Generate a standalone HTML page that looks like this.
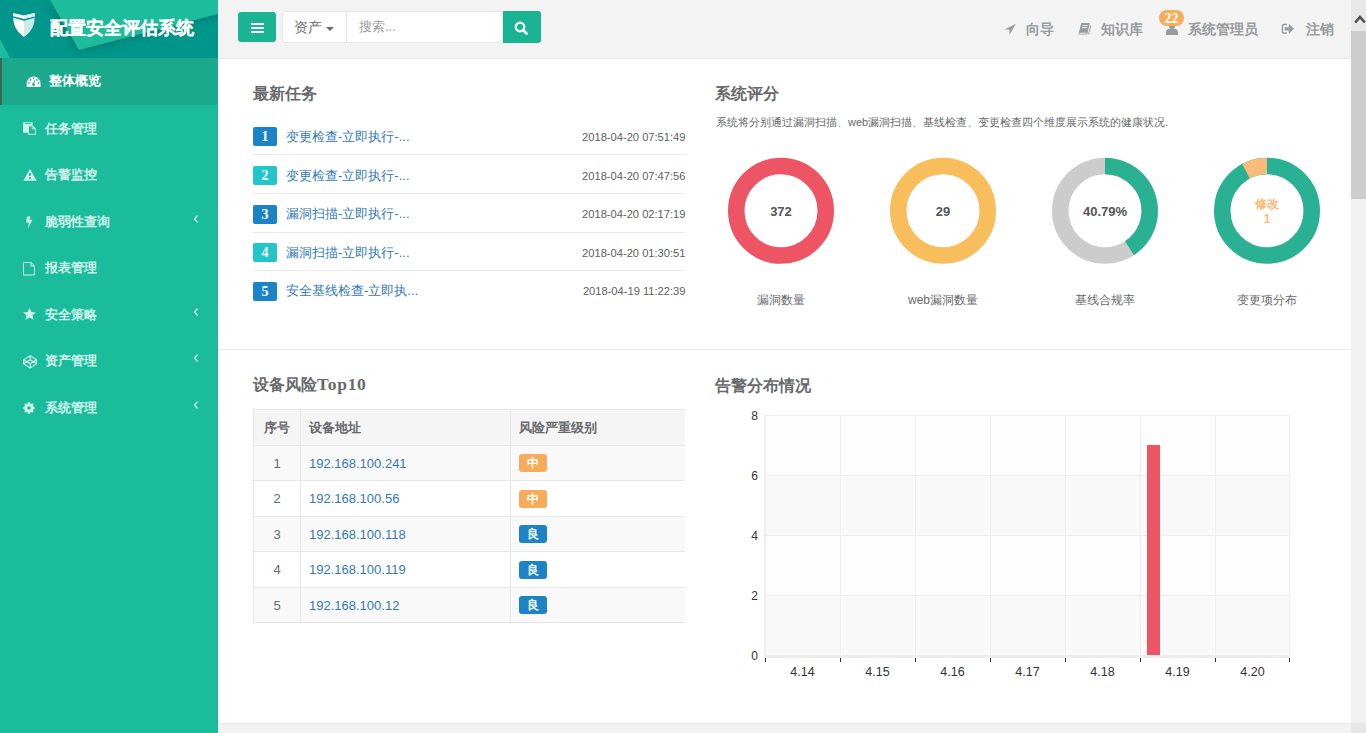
<!DOCTYPE html>
<html><head><meta charset="utf-8">
<style>
*{margin:0;padding:0;box-sizing:border-box}
html,body{width:1366px;height:733px;overflow:hidden;background:#fff;font-family:"Liberation Sans",sans-serif;color:#676a6c;font-size:13px}
.abs{position:absolute}
.nw{white-space:nowrap}
#side{position:absolute;left:0;top:0;width:218px;height:733px;background:#1abc9c}
#logo{position:absolute;left:0;top:0;width:218px;height:58px;background:#00968a;overflow:hidden}
#logo .title{position:absolute;left:50px;top:15px;-webkit-text-stroke:0.2px #fff;font-size:18px;font-weight:bold;color:#fff;line-height:26px;white-space:nowrap}
.menu{position:absolute;left:0;width:218px;height:47px;color:#d1f2eb;font-size:13px;font-weight:bold}
.menu.active{background:#1aa98a;color:#fff}
.menu.active:before{content:"";position:absolute;left:0;top:0;width:2px;height:47px;background:#3f6b56}
.menu .tx{position:absolute;left:45px;top:14px;line-height:20px;white-space:nowrap}
.menu svg{position:absolute}
.menu .arr{position:absolute;left:193px;top:17px}
#hdr{position:absolute;left:218px;top:0;width:1133px;height:59px;background:#f3f3f4;border-bottom:1px solid #e7eaec}
#main{position:absolute;left:218px;top:59px;width:1133px;height:674px;background:#fff}
#scroll{position:absolute;left:1351px;top:0;width:15px;height:733px;background:#f1f1f1}
.h3{position:absolute;font-size:16px;font-weight:bold;color:#676a6c;line-height:24px;white-space:nowrap}
.task{position:absolute;left:253px;width:432px;height:39px;border-bottom:1px solid #e7eaec}
.badge{position:absolute;left:0;top:11px;width:24px;height:19px;border-radius:2px;color:#fff;font-weight:bold;font-size:14px;text-align:center;line-height:20px;font-family:"Liberation Serif",serif}
.task .lk{position:absolute;left:33px;top:10.5px;color:#337ab7;font-size:13px;line-height:20px;white-space:nowrap}
.task .dt{position:absolute;right:-0.5px;top:10.5px;color:#5c5f61;font-size:11.15px;line-height:20px;white-space:nowrap}
.hdrtx{position:absolute;top:19px;line-height:20px;font-size:14px;font-weight:bold;color:#999c9e;white-space:nowrap}
.dn{position:absolute;top:157px}
.dnl{position:absolute;top:290px;width:160px;text-align:center;font-size:12px;color:#676a6c;line-height:20px}
table{position:absolute;left:253px;top:409px;width:432px;border-collapse:collapse;font-size:13px}
td,th{border:1px solid #e7e7e7;padding:0 8px;text-align:left;white-space:nowrap}
th{height:36px;background:#f5f5f5;font-weight:bold;color:#676a6c}
tr.odd td{background:#f9f9f9}
td.c{text-align:center}
td a{color:#337ab7}
.lbl{display:inline-block;width:28px;height:18px;border-radius:3px;color:#fff;font-weight:bold;font-size:12px;line-height:18px;text-align:center;vertical-align:middle}
.yl{position:absolute;left:740px;width:18px;text-align:right;font-size:12px;color:#333;line-height:14px}
.xl{position:absolute;top:665px;width:75px;text-align:center;font-size:12.5px;color:#333;line-height:14px}
</style></head><body>
<div id="side">
  <div id="logo">
    <svg class="abs" style="left:0;top:0" width="218" height="58">
      <defs>
        <linearGradient id="sh1" x1="0" y1="0" x2="1" y2="0"><stop offset="0" stop-color="#008f80"/><stop offset="1" stop-color="#009688"/></linearGradient>
      </defs>
      <filter id="ds" x="-20%" y="-50%" width="140%" height="200%"><feDropShadow dx="0" dy="0" stdDeviation="5" flood-color="#00463e" flood-opacity="0.55"/></filter>
      <polygon points="50,0 218,0 218,14 79,50" fill="#1abc9c" filter="url(#ds)"/>
      <polygon points="0,39 10,58 0,58" fill="#1abc9c"/>
      <path d="M13.1,12.9 L24,15.6 L34.9,12.9 L34.9,16.2 L24,18.9 L13.1,16.2 Z" fill="#fff"/>
      <path d="M24,15.6 L34.9,12.9 L34.9,16.2 L24,18.9 Z" fill="#d9efec"/>
      <path d="M13.2,17.8 L24,20.8 L24,36.9 C18,33 13.5,27 13.2,17.8 Z" fill="#fff"/>
      <path d="M24,20.8 L34.7,17.8 C34.5,27 30,33 24,36.9 Z" fill="#cdeae6"/>
    </svg>
    <div class="title">配置安全评估系统</div>
  </div>
  <div class="menu active" style="top:58px">
    <svg style="left:26px;top:18px" width="15" height="12" viewBox="0 0 15 12"><path d="M0.7,10.9 V7.5 A6.9,6.9 0 0 1 14.5,7.5 V10.9 Z" fill="#fff"/><g fill="#1aa98a"><circle cx="4.3" cy="3.9" r="0.85"/><circle cx="7.5" cy="2.35" r="0.85"/><circle cx="10.9" cy="3.9" r="0.85"/><circle cx="2.9" cy="7.1" r="0.85"/><circle cx="12.5" cy="7.1" r="0.85"/><circle cx="7.5" cy="8.6" r="1.35"/></g><path d="M7.4,8.5 L8.6,4.2" stroke="#1aa98a" stroke-width="0.9"/></svg>
    <div class="tx" style="left:49px;top:13px;color:#fff">整体概览</div>
  </div>
  <div class="menu" style="top:104.5px">
    <svg style="left:23px;top:17.5px" width="14" height="14" viewBox="0 0 14 14"><path d="M0,0.2 H9.7 V3.5 H5 V10.85 H0 Z" fill="#d1f2eb"/><rect x="2.1" y="1" width="5.8" height="0.9" fill="#1abc9c"/><path d="M5.5,4 H9.8 L12.5,6.7 V12.3 H5.5 Z" fill="none" stroke="#d1f2eb" stroke-width="1"/><path d="M9.3,4.2 V7.2 H12.3 Z" fill="#d1f2eb"/></svg>
    <div class="tx">任务管理</div>
  </div>
  <div class="menu" style="top:151px">
    <svg style="left:23px;top:18px" width="14" height="13" viewBox="0 0 14 13"><path d="M7,0 L13.6,11.8 L0.4,11.8 Z" fill="#d1f2eb"/><rect x="6" y="4" width="2" height="2.8" fill="#1abc9c"/><rect x="6" y="8.2" width="2" height="1.7" fill="#1abc9c"/></svg>
    <div class="tx">告警监控</div>
  </div>
  <div class="menu" style="top:197.5px">
    <svg style="left:25px;top:18px" width="9" height="13" viewBox="0 0 9 13"><path d="M2,0.5 L5.6,0.5 L4.2,3.8 L7.4,3.8 L3,12.5 L3.9,6.4 L1,6.4 Z" fill="#d1f2eb"/></svg>
    <div class="tx">脆弱性查询</div>
    <svg class="arr" width="6" height="8" viewBox="0 0 6 8"><path d="M4.5,0.5 L1.5,4 L4.5,7.5" fill="none" stroke="#d1f2eb" stroke-width="1.2"/></svg>
  </div>
  <div class="menu" style="top:244px">
    <svg style="left:23px;top:17.5px" width="13" height="14" viewBox="0 0 13 14"><path d="M0.5,0.5 L8,0.5 L11.5,4 L11.5,13 L0.5,13 Z" fill="none" stroke="#d1f2eb" stroke-width="1"/><path d="M8,0.5 L8,4 L11.5,4" fill="none" stroke="#d1f2eb" stroke-width="1"/></svg>
    <div class="tx">报表管理</div>
  </div>
  <div class="menu" style="top:290.5px">
    <svg style="left:22.5px;top:17px" width="13" height="12" viewBox="0 0 13 12"><path d="M6.5,0 L8.4,4 L12.8,4.4 L9.5,7.3 L10.5,11.7 L6.5,9.4 L2.5,11.7 L3.5,7.3 L0.2,4.4 L4.6,4 Z" fill="#d1f2eb"/></svg>
    <div class="tx">安全策略</div>
    <svg class="arr" width="6" height="8" viewBox="0 0 6 8"><path d="M4.5,0.5 L1.5,4 L4.5,7.5" fill="none" stroke="#d1f2eb" stroke-width="1.2"/></svg>
  </div>
  <div class="menu" style="top:337px">
    <svg style="left:22.5px;top:17.5px" width="15" height="14" viewBox="0 0 15 14"><path d="M7.2,0.7 L13.5,4.7 L13.5,8.8 L7.2,13 L0.6,8.8 L0.6,4.7 Z M7.2,0.7 V4.7 M7.2,13 V8.8 M0.6,4.7 L7.2,8.8 L13.5,4.7 M0.6,8.8 L7.2,4.7 L13.5,8.8" fill="none" stroke="#d1f2eb" stroke-width="1.1" stroke-linejoin="round"/></svg>
    <div class="tx">资产管理</div>
    <svg class="arr" width="6" height="8" viewBox="0 0 6 8"><path d="M4.5,0.5 L1.5,4 L4.5,7.5" fill="none" stroke="#d1f2eb" stroke-width="1.2"/></svg>
  </div>
  <div class="menu" style="top:383.5px">
    <svg style="left:23px;top:18px" width="12" height="12" viewBox="0 0 12 12"><path d="M4.28,1.84 L4.84,1.65 L4.89,0.31 L7.11,0.31 L7.16,1.65 L7.72,1.84 L8.25,2.1 L9.24,1.19 L10.81,2.76 L9.9,3.75 L10.16,4.28 L10.35,4.84 L11.69,4.89 L11.69,7.11 L10.35,7.16 L10.16,7.72 L9.9,8.25 L10.81,9.24 L9.24,10.81 L8.25,9.9 L7.72,10.16 L7.16,10.35 L7.11,11.69 L4.89,11.69 L4.84,10.35 L4.28,10.16 L3.75,9.9 L2.76,10.81 L1.19,9.24 L2.1,8.25 L1.84,7.72 L1.65,7.16 L0.31,7.11 L0.31,4.89 L1.65,4.84 L1.84,4.28 L2.1,3.75 L1.19,2.76 L2.76,1.19 L3.75,2.1 Z" fill="#d1f2eb"/><circle cx="6" cy="6" r="1.8" fill="#1abc9c"/></svg>
    <div class="tx">系统管理</div>
    <svg class="arr" width="6" height="8" viewBox="0 0 6 8"><path d="M4.5,0.5 L1.5,4 L4.5,7.5" fill="none" stroke="#d1f2eb" stroke-width="1.2"/></svg>
  </div>
</div>

<div id="hdr"></div>
<div id="main"></div>
<div id="scroll">
  <div class="abs" style="left:0;top:0;width:15px;height:31px;background:#e8e8e8"></div>
  <svg class="abs" style="left:3px;top:14px" width="12" height="11" viewBox="0 0 12 11"><path d="M1.2,8.5 L6,3 L10.8,8.5" fill="none" stroke="#505050" stroke-width="2.6"/></svg>
  <div class="abs" style="left:0;top:31px;width:15px;height:168px;background:#cdcdcd"></div>
  <div class="abs" style="left:0;top:723px;width:15px;height:10px;background:#e6e6e6"></div>
</div>

<!-- header controls -->
<div class="abs" style="left:238px;top:12px;width:38px;height:30px;background:#1ab394;border-radius:3px">
  <div class="abs" style="left:13px;top:11px;width:13px;height:2px;background:#fff"></div>
  <div class="abs" style="left:13px;top:15px;width:13px;height:2px;background:#fff"></div>
  <div class="abs" style="left:13px;top:19px;width:13px;height:2px;background:#fff"></div>
</div>
<div class="abs" style="left:282px;top:11px;width:221px;height:32px;background:#fff;border:1px solid #e5e6e7;border-radius:3px 0 0 3px"></div>
<div class="abs" style="left:346px;top:12px;width:1px;height:30px;background:#e5e6e7"></div>
<div class="abs nw" style="left:294px;top:17px;font-size:14px;line-height:20px;color:#676a6c">资产</div>
<div class="abs" style="left:326px;top:27px;width:0;height:0;border-left:4px solid transparent;border-right:4px solid transparent;border-top:4px solid #676a6c"></div>
<div class="abs nw" style="left:359px;top:17px;font-size:13px;line-height:20px;color:#999">搜索...</div>
<div class="abs" style="left:503px;top:11px;width:38px;height:32px;background:#1ab394;border-radius:0 3px 3px 0">
  <svg class="abs" style="left:11px;top:10px" width="15" height="14" viewBox="0 0 15 14"><circle cx="6" cy="6" r="4.3" fill="none" stroke="#fff" stroke-width="2.2"/><path d="M9,9 L12.5,12.5" stroke="#fff" stroke-width="2.6" stroke-linecap="round"/></svg>
</div>

<svg class="abs" style="left:1004px;top:23px" width="12" height="12" viewBox="0 0 12 12"><path d="M11.8,0.8 L0.3,6.4 L5.3,6.6 L5.5,11.9 Z" fill="#999c9e"/></svg>
<div class="hdrtx" style="left:1026px">向导</div>
<svg class="abs" style="left:1078px;top:23px" width="14" height="12" viewBox="0 0 14 12"><path d="M3.2,0 L11.8,0 L9.3,11.5 L0.4,11.5 Z" fill="#999c9e"/><path d="M4.6,2.6 L9.6,2.6 M4.1,4.6 L9.1,4.6 M1.4,10.3 L8.6,10.3" stroke="#f3f3f4" stroke-width="0.9"/><path d="M12.8,2.5 L10.6,11.5" stroke="#999c9e" stroke-width="0.9"/></svg>
<div class="hdrtx" style="left:1101px">知识库</div>
<svg class="abs" style="left:1166px;top:23px" width="12" height="12" viewBox="0 0 12 12"><circle cx="6" cy="3" r="3" fill="#999c9e"/><path d="M0,12 L0,9 C0,6.5 2,5.5 6,5.5 C10,5.5 12,6.5 12,9 L12,12 Z" fill="#999c9e"/></svg>
<div class="abs" style="left:1159px;top:10px;width:25px;height:16px;border-radius:8px;background:#f8ac59;color:#fff;font-weight:bold;font-size:14px;line-height:17px;text-align:center;font-family:'Liberation Serif',serif">22</div>
<div class="hdrtx" style="left:1188px">系统管理员</div>
<svg class="abs" style="left:1281px;top:23px" width="14" height="12" viewBox="0 0 14 12"><path d="M5.8,1.6 H2.6 Q1.4,1.6 1.4,2.8 V8.8 Q1.4,10 2.6,10 H5.8" fill="none" stroke="#999c9e" stroke-width="1.5"/><path d="M3.6,4.3 H7.8 V0.7 L13,5.8 L7.8,10.9 V7.6 H3.6 Z" fill="#999c9e"/></svg>
<div class="hdrtx" style="left:1305.5px">注销</div>

<!-- separators -->
<div class="abs" style="left:218px;top:349px;width:1133px;height:1px;background:#e7eaec"></div>
<div class="abs" style="left:218px;top:723px;width:1133px;height:10px;background:#f3f3f4;border-top:1px solid #e7eaec"></div>

<!-- tasks -->
<div class="h3" style="left:253px;top:82px">最新任务</div>
<div class="task" style="top:116px"><div class="badge" style="background:#1c84c6">1</div><div class="lk">变更检查-立即执行-...</div><div class="dt">2018-04-20 07:51:49</div></div>
<div class="task" style="top:155px"><div class="badge" style="background:#23c6c8">2</div><div class="lk">变更检查-立即执行-...</div><div class="dt">2018-04-20 07:47:56</div></div>
<div class="task" style="top:193.5px"><div class="badge" style="background:#1c84c6">3</div><div class="lk">漏洞扫描-立即执行-...</div><div class="dt">2018-04-20 02:17:19</div></div>
<div class="task" style="top:232px"><div class="badge" style="background:#23c6c8">4</div><div class="lk">漏洞扫描-立即执行-...</div><div class="dt">2018-04-20 01:30:51</div></div>
<div class="task" style="top:270.5px;border-bottom:none"><div class="badge" style="background:#1c84c6">5</div><div class="lk">安全基线检查-立即执...</div><div class="dt">2018-04-19 11:22:39</div></div>

<!-- score -->
<div class="h3" style="left:715px;top:82px">系统评分</div>
<div class="abs nw" style="left:716px;top:114px;font-size:11px;line-height:16px;color:#676a6c">系统将分别通过漏洞扫描、web漏洞扫描、基线检查、变更检查四个维度展示系统的健康状况.</div>

<svg class="abs" style="left:700px;top:140px" width="650" height="150" viewBox="700 140 650 150">
  <g fill="none" stroke-width="16.5">
    <circle cx="781" cy="210.8" r="44.75" stroke="#ed5565"/>
    <circle cx="943" cy="210.8" r="44.75" stroke="#f8be5c"/>
    <circle cx="1105" cy="210.8" r="44.75" stroke="#cccccc"/>
    <circle cx="1267" cy="210.8" r="44.75" stroke="#2ab193"/>
  </g>
  <path d="M1105.0,157.8 A53,53 0 0 1 1134.02,255.15 L1124.99,241.34 A36.5,36.5 0 0 0 1105.0,174.3 Z" fill="#2ab193"/>
  <path d="M1242.12,164.0 A53,53 0 0 1 1267.0,157.8 L1267.0,174.3 A36.5,36.5 0 0 0 1249.86,178.57 Z" fill="#f8bb7a"/>
</svg>
<div class="abs nw" style="left:741px;top:204px;width:80px;text-align:center;font-size:13px;font-weight:bold;color:#555;line-height:16px">372</div>
<div class="abs nw" style="left:903px;top:204px;width:80px;text-align:center;font-size:13px;font-weight:bold;color:#555;line-height:16px">29</div>
<div class="abs nw" style="left:1065px;top:204px;width:80px;text-align:center;font-size:13px;font-weight:bold;color:#555;line-height:16px">40.79%</div>
<div class="abs nw" style="left:1227px;top:197px;width:80px;text-align:center;font-size:12px;font-weight:bold;color:#f8bb7a;line-height:15px">修改<br>1</div>
<div class="dnl" style="left:701px">漏洞数量</div>
<div class="dnl" style="left:863px">web漏洞数量</div>
<div class="dnl" style="left:1025px">基线合规率</div>
<div class="dnl" style="left:1187px">变更项分布</div>

<!-- table -->
<div class="h3" style="left:253px;top:373px">设备风险<span style="font-family:'Liberation Serif',serif;font-size:17.5px;letter-spacing:0.7px;line-height:0">Top10</span></div>
<div class="abs" style="left:253px;top:409px;width:432px;height:214px;overflow:hidden">
<table style="left:0;top:0;width:450px">
<tr><th style="width:47px;text-align:center">序号</th><th style="width:210px">设备地址</th><th>风险严重级别</th></tr>
<tr class="odd" style="height:35px"><td class="c">1</td><td><a>192.168.100.241</a></td><td><span class="lbl" style="background:#f8ac59">中</span></td></tr>
<tr style="height:36px"><td class="c">2</td><td><a>192.168.100.56</a></td><td><span class="lbl" style="background:#f8ac59">中</span></td></tr>
<tr class="odd" style="height:35px"><td class="c">3</td><td><a>192.168.100.118</a></td><td><span class="lbl" style="background:#1c84c6">良</span></td></tr>
<tr style="height:36px"><td class="c">4</td><td><a>192.168.100.119</a></td><td><span class="lbl" style="background:#1c84c6">良</span></td></tr>
<tr class="odd" style="height:35px"><td class="c">5</td><td><a>192.168.100.12</a></td><td><span class="lbl" style="background:#1c84c6">良</span></td></tr>
</table>
</div>

<!-- chart -->
<div class="h3" style="left:715px;top:374px">告警分布情况</div>
<svg class="abs" style="left:740px;top:400px" width="600" height="300" viewBox="740 400 600 300">
  <rect x="765" y="415" width="525" height="60" fill="#fefefe"/>
  <rect x="765" y="475" width="525" height="60" fill="#f9f9f9"/>
  <rect x="765" y="535" width="525" height="60" fill="#fefefe"/>
  <rect x="765" y="595" width="525" height="60" fill="#f9f9f9"/>
  <g stroke="#eeeeee" stroke-width="1">
    <path d="M765,415.5 H1290 M765,475.5 H1290 M765,535.5 H1290 M765,595.5 H1290"/>
    <path d="M840.5,415 V655 M915.5,415 V655 M990.5,415 V655 M1065.5,415 V655 M1140.5,415 V655 M1215.5,415 V655 M1289.5,415 V655"/>
  </g>
  <rect x="764" y="415" width="2" height="243" fill="#eeeeee"/>
  <rect x="764" y="655" width="526" height="3" fill="#eeeeee"/>
  <g stroke="#333" stroke-width="1">
    <path d="M765.5,658 V662 M840.5,658 V662 M915.5,658 V662 M990.5,658 V662 M1065.5,658 V662 M1140.5,658 V662 M1215.5,658 V662 M1289.5,658 V662"/>
  </g>
  <rect x="1147" y="445" width="13" height="210" fill="#ed5565"/>
</svg>
<div class="yl" style="top:409px">8</div>
<div class="yl" style="top:469px">6</div>
<div class="yl" style="top:529px">4</div>
<div class="yl" style="top:589px">2</div>
<div class="yl" style="top:649px">0</div>
<div class="xl" style="left:765px">4.14</div>
<div class="xl" style="left:840px">4.15</div>
<div class="xl" style="left:915px">4.16</div>
<div class="xl" style="left:990px">4.17</div>
<div class="xl" style="left:1065px">4.18</div>
<div class="xl" style="left:1140px">4.19</div>
<div class="xl" style="left:1215px">4.20</div>

</body></html>
